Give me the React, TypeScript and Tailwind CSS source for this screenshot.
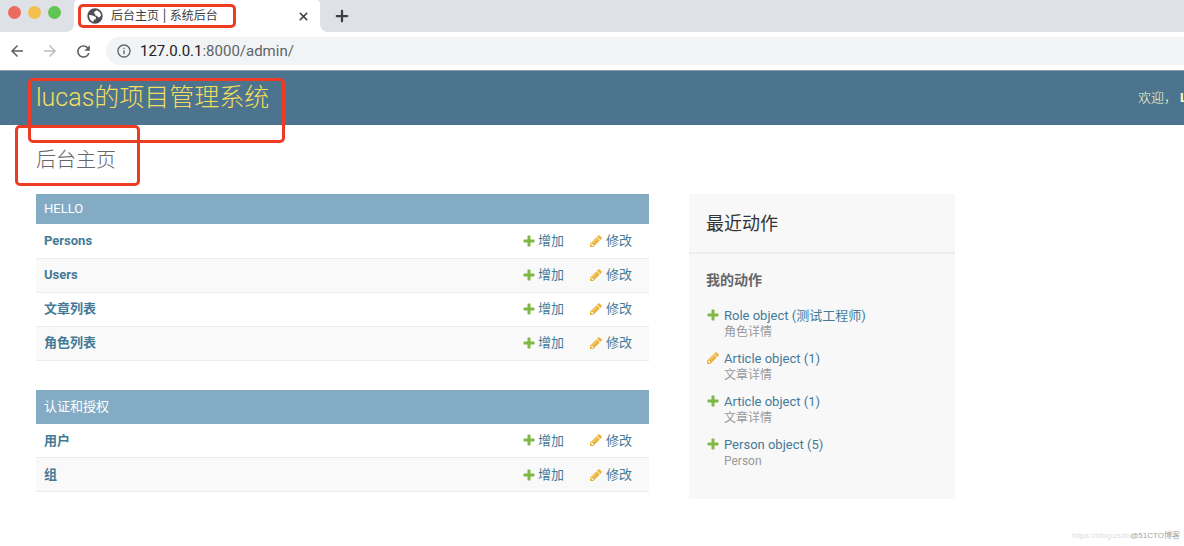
import { Plus, X } from 'lucide-react';
import { MdArrowBack, MdArrowForward, MdInfoOutline, MdRefresh } from 'react-icons/md';

const apps = [
  { name: 'HELLO', head: 'h-[30px]', models: ['Persons', 'Users', '文章列表', '角色列表'] },
  { name: '认证和授权', head: 'h-[34px]', models: ['用户', '组'] },
];

const actions = [
  { type: 'add', title: 'Role object (测试工程师)', model: '角色详情' },
  { type: 'change', title: 'Article object (1)', model: '文章详情' },
  { type: 'add', title: 'Article object (1)', model: '文章详情' },
  { type: 'add', title: 'Person object (5)', model: 'Person' },
];

const GlobeIcon = () => (
  <svg viewBox="0 0 24 24" className="size-4 shrink-0" aria-hidden="true">
    <circle cx="12" cy="12" r="11.5" fill="#4b4f54" />
    <path d="M14.5 3.2L11 5.5l-.5 2.5 2 1.2-.3 2 2.8.6 1.2 2.2 2.8-.3 2-2.7Q21 5.8 14.5 3.2z" fill="#fff" />
    <path d="M3 10.5l4.5.3 3.5 1.7 2.5 1.5-.5 2.7-3 1.3-.5 3Q3.6 18.8 3 10.5z" fill="#fff" />
  </svg>
);

const AddIcon = () => (
  <svg viewBox="0 0 1792 1792" className="size-[14px] shrink-0" fill="#7fb845" aria-hidden="true">
    <path d="M1600 796v192q0 40-28 68t-68 28h-416v416q0 40-28 68t-68 28h-192q-40 0-68-28t-28-68v-416h-416q-40 0-68-28t-28-68v-192q0-40 28-68t68-28h416v-416q0-40 28-68t68-28h192q40 0 68 28t28 68v416h416q40 0 68 28t28 68z" />
  </svg>
);

const ChangeIcon = () => (
  <svg viewBox="0 0 1792 1792" className="size-[14px] shrink-0" fill="#ebb53c" aria-hidden="true">
    <path d="M491 1536l91-91-235-235-91 91v107h128v128h107zm523-928q0-22-22-22-10 0-17 7l-542 542q-7 7-7 17 0 22 22 22 10 0 17-7l542-542q7-7 7-17zm-54-192l416 416-832 832h-416v-416zm683 96q0 53-37 90l-166 166-416-416 166-165q36-38 90-38 53 0 91 38l235 234q37 39 37 91z" />
  </svg>
);

const Browser = () => (
  <div className="bg-white">
    {/* Tab strip */}
    <div className="flex h-8">
      <div className="flex w-[74px] shrink-0 gap-[7px] rounded-br-lg bg-[#dee1e6] pt-[6px] pl-2">
        <span className="size-[13px] rounded-full bg-[#ed6a5e]" />
        <span className="size-[13px] rounded-full bg-[#f5bf4f]" />
        <span className="size-[13px] rounded-full bg-[#61c554]" />
      </div>
      <div className="w-[246px] shrink-0 bg-[linear-gradient(#dee1e6_50%,#fff_50%)]">
        <div className="flex h-8 items-center justify-between rounded-t bg-white pr-[10px] pl-1">
          <div className="flex h-6 w-[158px] items-center gap-2 rounded-[5px] border-[3px] border-[#ee3b24] pl-[6px]">
            <GlobeIcon />
            <span className="text-xs text-[#3c4043] font-[Inter,'Noto_Sans_CJK_SC',sans-serif]">后台主页 | 系统后台</span>
          </div>
          <button aria-label="Close tab" className="text-[#3c4043]">
            <X size={13} strokeWidth={3} />
          </button>
        </div>
      </div>
      <div className="flex flex-1 items-center rounded-bl-lg bg-[#dee1e6] pl-[13px]">
        <button aria-label="New tab" className="text-[#3c4043]">
          <Plus size={18} strokeWidth={3} />
        </button>
      </div>
    </div>

    {/* Toolbar */}
    <div className="flex h-[38px] items-center pl-2">
      <button aria-label="Back" className="mr-[15px] text-[#5a5e63]"><MdArrowBack size={18} /></button>
      <button aria-label="Forward" className="mr-[15px] text-[#babcbe]"><MdArrowForward size={18} /></button>
      <button aria-label="Reload" className="mr-[13px] text-[#5a5e63]"><MdRefresh size={19} /></button>
      <div className="flex h-7 flex-1 items-center gap-2 rounded-l-full bg-[#f1f3f4] pl-[10px]">
        <MdInfoOutline size={16} className="text-[#5f6368]" />
        <span className="text-[15px] text-[#5f6368]">
          <span className="text-[#202124]">127.0.0.1</span>:8000/admin/
        </span>
      </div>
    </div>
  </div>
);

const AppModule = ({ name, head, models }: { name: string; head: string; models: string[] }) => (
  <table className="mb-[29px] w-full text-[13px] text-[#447a98]">
    <caption className={`${head} bg-[#83abc4] px-2 text-left text-[13px] text-white`}>
      <div className="flex h-full items-center">{name}</div>
    </caption>
    <tbody>
      {models.map((model) => (
        <tr key={model} className="h-[34px] border-b border-[#ececec] even:bg-[#f9f9f9]">
          <th scope="row" className="px-2 text-left font-bold">
            <a href="#">{model}</a>
          </th>
          <td className="w-[67px]">
            <a href="#" className="flex items-center gap-[2px]"><AddIcon />增加</a>
          </td>
          <td className="w-[60px]">
            <a href="#" className="flex items-center gap-[3px]"><ChangeIcon />修改</a>
          </td>
        </tr>
      ))}
    </tbody>
  </table>
);

const RecentActions = () => (
  <aside className="w-[266px] shrink-0 self-start bg-[#f8f8f8] pb-[19px]">
    <h2 className="border-b-2 border-[#eeeeee] px-[17px] pt-4 pb-[15px] text-lg leading-[27px] text-[#333]">最近动作</h2>
    <h3 className="px-[17px] pt-[14px] text-sm leading-6 font-bold text-[#666]">我的动作</h3>
    <ul className="mt-4 px-[17px]">
      {actions.map((action, index) => (
        <li key={index} className="mb-[11px] flex gap-[3px]">
          <span className="flex h-[14px] w-[15px] shrink-0 items-center">
            {action.type === 'add' ? <AddIcon /> : <ChangeIcon />}
          </span>
          <div>
            <a href="#" className="block text-[13px] leading-4 text-[#447a98]">{action.title}</a>
            <span className="block text-xs leading-4 text-[#999]">{action.model}</span>
          </div>
        </li>
      ))}
    </ul>
  </aside>
);

export default function App() {
  return (
    <div className="relative min-h-screen overflow-hidden bg-white font-[Roboto,'Noto_Sans_CJK_SC',sans-serif]">
      <Browser />

      <header className="flex h-[55px] items-center justify-between border-t border-[#8b9aa6] bg-[#4c748e] pl-9">
        <div className="relative">
          <h1 className="text-[25px] leading-8 font-light text-[#f5dd5d]">
            <a href="#">lucas的项目管理系统</a>
          </h1>
          {/* Highlight frame */}
          <span className="absolute -top-1 -right-4 -left-2 h-[65px] rounded-[5px] border-[3px] border-[#ee3b24]" />
        </div>
        <div className="flex w-[46px] overflow-hidden text-[13px] font-light whitespace-nowrap text-[#ffffcc]">
          <span className="w-[42px] shrink-0">欢迎，</span>
          <strong className="font-bold">L</strong>
        </div>
      </header>

      <main className="px-9 pt-5">
        <div className="relative mb-[19px] w-fit">
          <h2 className="text-xl leading-[30px] font-light text-[#666]">后台主页</h2>
          {/* Highlight frame */}
          <span className="absolute -top-5 -right-6 -left-[21px] h-[61px] rounded-[5px] border-[3px] border-[#ee3b24]" />
        </div>
        <div className="flex gap-10">
          <div className="max-w-[613px] flex-1">
            {apps.map((app) => (
              <AppModule key={app.name} {...app} />
            ))}
          </div>
          <RecentActions />
        </div>
      </main>

      {/* Watermark */}
      <div className="absolute right-1 bottom-1 flex text-[8px] leading-3 font-[Liberation_Sans,'Noto_Sans_CJK_SC',sans-serif]">
        <span className="text-[#dddddd]">https://blog.csdn</span>
        <span className="text-[#a5a5a5]">@51CTO博客</span>
      </div>
    </div>
  );
}
